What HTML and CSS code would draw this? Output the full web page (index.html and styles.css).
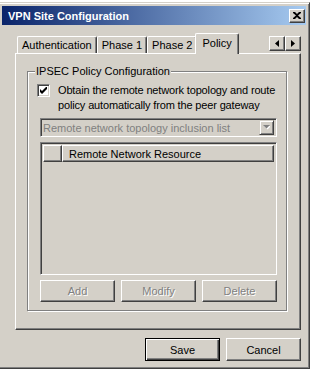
FILE: index.html
```html
<!DOCTYPE html>
<html lang="en">
<head>
    <meta charset="UTF-8">
    <title>VPN Site Configuration</title>
    <link rel="stylesheet" href="styles.css">
</head>
<body>
    <div class="window">
        <div class="titlebar">
            <span class="title">VPN Site Configuration</span>
            <button class="close">
                <svg width="8" height="7" viewBox="0 0 8 7"><path d="M0 0h2l2 2 2-2h2v1L5 3.5 8 6v1H6L4 5 2 7H0V6l3-2.5L0 1z" fill="#000"/></svg>
            </button>
        </div>
        <div class="content">
            <div class="tabstrip">
                <div class="tab">Authentication</div>
                <div class="tab">Phase 1</div>
                <div class="tab">Phase 2</div>
                <div class="tab active">Policy</div>
                <div class="scroller">
                    <button class="arrow"><svg width="4" height="7" viewBox="0 0 4 7"><path d="M4 0v7L0 3.5z" fill="#000"/></svg></button>
                    <button class="arrow"><svg width="4" height="7" viewBox="0 0 4 7"><path d="M0 0v7l4-3.5z" fill="#000"/></svg></button>
                </div>
            </div>
            <div class="panel">
                <fieldset class="group">
                    <legend>IPSEC Policy Configuration</legend>
                    <label class="check">
                        <span class="box"><svg width="7" height="7" viewBox="0 0 7 7"><path d="M0 2v3l2 2 5-5V-1L2 4z" fill="#000"/></svg></span>
                        <span class="check-text">Obtain the remote network topology and route<br>policy automatically from the peer gateway</span>
                    </label>
                    <div class="combo">
                        <span class="combo-text">Remote network topology inclusion list</span>
                        <span class="drop"><svg width="7" height="5" viewBox="0 0 7 5"><path d="M1 1h7L4.5 4.5z" fill="#fff"/><path d="M0 0h7L3.5 3.5z" fill="#808080"/></svg></span>
                    </div>
                    <div class="list">
                        <div class="list-head">
                            <div class="col first"></div>
                            <div class="col">Remote Network Resource</div>
                        </div>
                    </div>
                    <div class="actions">
                        <button class="btn" disabled>Add</button>
                        <button class="btn" disabled>Modify</button>
                        <button class="btn" disabled>Delete</button>
                    </div>
                </fieldset>
            </div>
            <div class="footer">
                <button class="btn default">Save</button>
                <button class="btn">Cancel</button>
            </div>
        </div>
    </div>
</body>
</html>
```

FILE: styles.css
```css
body {
    margin: 0;
    background-color: #fff;
    font-family: "Liberation Sans", Arial, sans-serif;
    font-size: 11px;
    color: #000;
}

.window {
    box-sizing: border-box;
    width: 312px;
    height: 367px;
    margin: 2px 0 0 -2px;
    padding: 3px;
    background-color: #d4d0c8;
    border: 1px solid;
    border-color: #d4d0c8 #404040 #404040 #d4d0c8;
    box-shadow: inset 1px 1px #fff, inset -1px -1px #808080;
    display: flex;
    flex-direction: column;
}

.titlebar {
    height: 19px;
    flex-shrink: 0;
    background: linear-gradient(to right, #0a246a, #a6caf0);
    display: flex;
    align-items: center;
    justify-content: space-between;
    padding: 0 1px 0 6px;
    color: #fff;
    font-weight: bold;
}

.close {
    box-sizing: border-box;
    width: 16px;
    height: 14px;
    padding: 0;
    background-color: #d4d0c8;
    border: 1px solid;
    border-color: #fff #404040 #404040 #fff;
    box-shadow: inset -1px -1px #808080;
    display: flex;
    align-items: center;
    justify-content: center;
}

.content {
    flex: 1;
    display: flex;
    flex-direction: column;
    padding: 8px 5px 4px 13px;
}

button {
    font-family: inherit;
    font-size: 11px;
}

.tabstrip {
    height: 20px;
    display: flex;
    align-items: flex-end;
    padding-left: 2px;
}

.tab {
    box-sizing: border-box;
    height: 17px;
    padding: 0 4px;
    display: flex;
    align-items: center;
    border: 1px solid;
    border-bottom: none;
    border-color: #fff #404040 #fff #fff;
    border-radius: 2px 2px 0 0;
    box-shadow: inset -1px 0 #808080;
}

.tab.active {
    position: relative;
    height: 21px;
    margin: 0 -2px -1px;
    padding: 0 6px 3px;
    background-color: #d4d0c8;
}

.scroller {
    display: flex;
    margin-left: auto;
    margin-bottom: 2px;
}

.arrow {
    box-sizing: border-box;
    width: 16px;
    height: 15px;
    padding: 0;
    background-color: #d4d0c8;
    border: 1px solid;
    border-color: #fff #404040 #404040 #fff;
    box-shadow: inset -1px -1px #808080;
    display: flex;
    align-items: center;
    justify-content: center;
}

.panel {
    flex: 1;
    display: flex;
    padding: 11px 13px 18px 11px;
    border: 1px solid;
    border-color: #fff #404040 #404040 #fff;
    box-shadow: inset -1px -1px #808080;
}

.group {
    flex: 1;
    min-width: 0;
    margin: 0;
    padding: 5px 9px 8px 12px;
    border: 1px solid #808080;
    box-shadow: inset 1px 1px #fff, 1px 1px #fff;
    display: flex;
    flex-direction: column;
}

.group legend {
    margin-left: -5px;
    padding: 0 1px;
    line-height: 13px;
    background-color: #d4d0c8;
}

.check {
    display: flex;
    align-items: flex-start;
    gap: 8px;
    margin-left: -3px;
    line-height: 15px;
}

.check-text {
    white-space: nowrap;
    letter-spacing: -0.15px;
}

.box {
    box-sizing: border-box;
    flex-shrink: 0;
    width: 13px;
    height: 13px;
    margin-top: 1px;
    background-color: #fff;
    border: 1px solid;
    border-color: #808080 #fff #fff #808080;
    box-shadow: inset 1px 1px #404040, inset -1px -1px #d4d0c8;
    display: flex;
    align-items: center;
    justify-content: center;
}

.combo {
    box-sizing: border-box;
    height: 19px;
    margin-top: 5px;
    padding: 2px 2px 2px 2px;
    display: flex;
    align-items: center;
    justify-content: space-between;
    border: 1px solid;
    border-color: #808080 #fff #fff #808080;
    box-shadow: inset 1px 1px #404040, inset -1px -1px #d4d0c8;
    color: #808080;
}

.drop {
    box-sizing: border-box;
    width: 15px;
    height: 15px;
    border: 1px solid;
    border-color: #d4d0c8 #404040 #404040 #d4d0c8;
    box-shadow: inset 1px 1px #fff, inset -1px -1px #808080;
    display: flex;
    align-items: center;
    justify-content: center;
}

.list {
    flex: 1;
    margin-top: 5px;
    padding: 2px;
    border: 1px solid;
    border-color: #808080 #fff #fff #808080;
    box-shadow: inset 1px 1px #404040, inset -1px -1px #d4d0c8;
}

.list-head {
    display: flex;
    height: 17px;
}

.col {
    box-sizing: border-box;
    flex: 1;
    padding-left: 6px;
    display: flex;
    align-items: center;
    border: 1px solid;
    border-color: #fff #404040 #404040 #fff;
    box-shadow: inset -1px -1px #808080;
}

.col.first {
    flex: 0 0 19px;
}

.actions {
    display: grid;
    grid-template-columns: repeat(3, 1fr);
    gap: 6px;
    margin-top: 5px;
}

.btn {
    box-sizing: border-box;
    height: 22px;
    padding: 0;
    background-color: #d4d0c8;
    color: #000;
    border: 1px solid;
    border-color: #fff #404040 #404040 #fff;
    box-shadow: inset -1px -1px #808080;
}

.btn:disabled {
    color: #808080;
    text-shadow: 1px 1px #fff;
}

.footer {
    display: flex;
    justify-content: flex-end;
    gap: 6px;
    padding-top: 8px;
}

.footer .btn {
    width: 75px;
    height: 23px;
}

.btn.default {
    border-color: #000;
    box-shadow: inset 1px 1px #fff, inset -1px -1px #404040, inset -2px -2px #808080;
}
```
